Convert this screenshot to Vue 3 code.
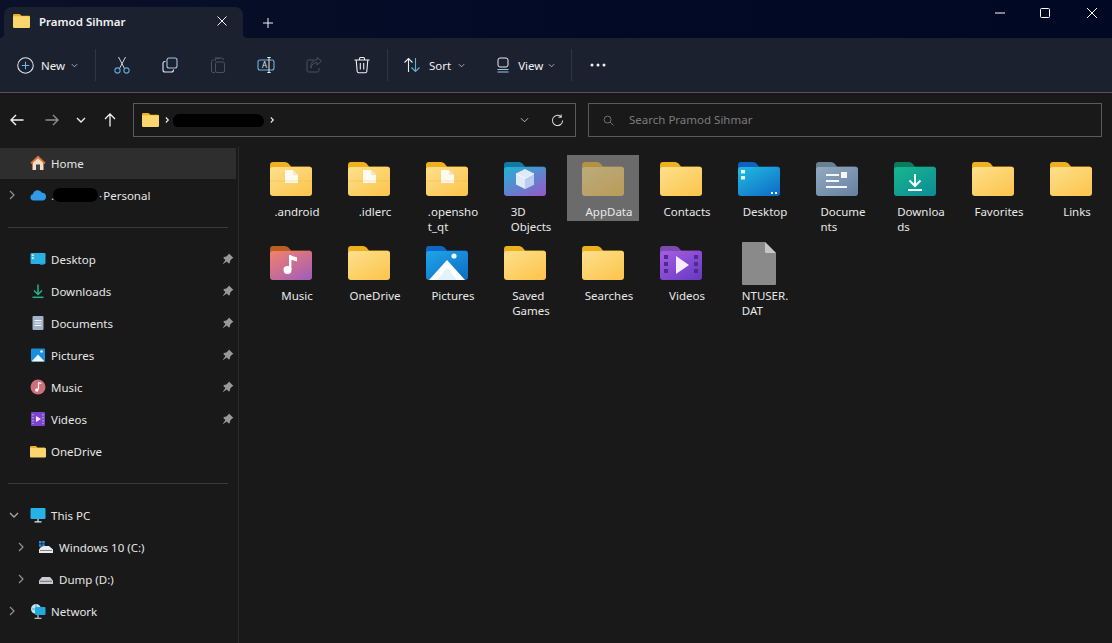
<script setup>
const tools = ['cut', 'copy', 'paste', 'rename', 'share', 'trash']

const navRows = [
  { kind: 'row', icon: 'home', label: 'Home', active: true },
  { kind: 'row', icon: 'cloud', label: 'Personal', chevron: 'right', masked: true },
  { kind: 'sep' },
  { kind: 'row', icon: 'desktop', label: 'Desktop', pin: true },
  { kind: 'row', icon: 'downloads', label: 'Downloads', pin: true },
  { kind: 'row', icon: 'documents', label: 'Documents', pin: true },
  { kind: 'row', icon: 'pictures', label: 'Pictures', pin: true },
  { kind: 'row', icon: 'music', label: 'Music', pin: true },
  { kind: 'row', icon: 'videos', label: 'Videos', pin: true },
  { kind: 'row', icon: 'folder', label: 'OneDrive' },
  { kind: 'sep' },
  { kind: 'row', icon: 'pc', label: 'This PC', chevron: 'down' },
  { kind: 'row', icon: 'cdrive', label: 'Windows 10 (C:)', chevron: 'right', sub: true },
  { kind: 'row', icon: 'ddrive', label: 'Dump (D:)', chevron: 'right', sub: true },
  { kind: 'row', icon: 'network', label: 'Network', chevron: 'right' }
]

const yellow = { tab: '#eeb01f', from: '#fde08c', to: '#fcc650' }
const palette = {
  yellow,
  cube: { tab: '#0f7ba3', from: '#22b4d6', to: '#8e5fc8' },
  desktop: { tab: '#0f62c4', from: '#22bde0', to: '#0f70c8' },
  documents: { tab: '#66818f', from: '#93a9c0', to: '#6a84a4' },
  downloads: { tab: '#0b7a60', from: '#17b78e', to: '#0e8e96' },
  music: { tab: '#b9601e', from: '#f4826a', to: '#a55fb4' },
  pictures: { tab: '#0f66c8', from: '#1fa6ea', to: '#0f70c4' },
  videos: { tab: '#7b4bb2', from: '#a75ee2', to: '#6a3cc4' }
}

const files = [
  { lines: ['.android'], tone: 'yellow', art: 'doc' },
  { lines: ['.idlerc'], tone: 'yellow', art: 'doc' },
  { lines: ['.opensho', 't_qt'], tone: 'yellow', art: 'doc' },
  { lines: ['3D', 'Objects'], tone: 'cube', art: 'cube' },
  { lines: ['AppData'], tone: 'yellow', selected: true },
  { lines: ['Contacts'], tone: 'yellow' },
  { lines: ['Desktop'], tone: 'desktop', art: 'desktop' },
  { lines: ['Docume', 'nts'], tone: 'documents', art: 'documents' },
  { lines: ['Downloa', 'ds'], tone: 'downloads', art: 'downloads' },
  { lines: ['Favorites'], tone: 'yellow' },
  { lines: ['Links'], tone: 'yellow' },
  { lines: ['Music'], tone: 'music', art: 'music' },
  { lines: ['OneDrive'], tone: 'yellow' },
  { lines: ['Pictures'], tone: 'pictures', art: 'pictures' },
  { lines: ['Saved', 'Games'], tone: 'yellow' },
  { lines: ['Searches'], tone: 'yellow' },
  { lines: ['Videos'], tone: 'videos', art: 'videos' },
  { lines: ['NTUSER.', 'DAT'], page: true }
].map((f, i) => ({ ...f, id: 'fg' + i, colors: f.tone ? palette[f.tone] : null }))
</script>

<template>
  <div class="window">
    <header class="titlebar">
      <div class="tab">
        <svg class="tab-folder" viewBox="0 0 42 34" width="17" height="14">
          <path d="M3 0H15q2 0 3.500 1.500L21 4H39a3 3 0 0 1 3 3v10H0V3a3 3 0 0 1 3-3z" fill="#eeb01f" />
          <rect y="5" width="42" height="29" rx="3" fill="#fdd56f" />
        </svg>
        <span class="tab-title">Pramod Sihmar</span>
        <svg class="tab-close" viewBox="0 0 10 10" width="10" height="10"><path d="M.5.5l9 9M9.500.5l-9 9" stroke="#f2f2f2" stroke-width="1" fill="none" /></svg>
      </div>
      <svg class="tab-plus" viewBox="0 0 10 10" width="10" height="10"><path d="M5 0v10M0 5h10" stroke="#f2f2f2" stroke-width="1" fill="none" /></svg>
      <div class="window-controls">
        <svg viewBox="0 0 10 10" width="10" height="10"><path d="M0 5h10" stroke="#fff" stroke-width="1" /></svg>
        <svg viewBox="0 0 10 10" width="10" height="10"><rect x=".5" y=".5" width="9" height="9" rx="1" stroke="#fff" fill="none" /></svg>
        <svg viewBox="0 0 10 10" width="10" height="10"><path d="M0 0l10 10M10 0L0 10" stroke="#fff" stroke-width="1" /></svg>
      </div>
    </header>

    <div class="toolbar">
      <button class="tool new">
        <svg viewBox="0 0 16 16" width="17" height="17">
          <circle cx="8" cy="8" r="7.300" fill="none" stroke="#dfe6ee" stroke-width="1" />
          <path d="M8 4.500v7M4.500 8h7" stroke="#6db8ea" stroke-width="1" />
        </svg>
        <span class="tool-label">New</span>
        <svg class="chev" viewBox="0 0 8 5" width="7" height="5"><path d="M1 1l3 3 3-3" stroke="#b9bec6" fill="none" /></svg>
      </button>
      <span class="divider" />
      <button v-for="t in tools" :key="t" class="tool icon-only">
        <svg viewBox="0 0 18 18" width="18" height="18" fill="none">
          <template v-if="t === 'cut'">
            <path d="M5.500 1l6 11.500M12.500 1l-6 11.500" stroke="#cfd6de" />
            <circle cx="4.500" cy="14.500" r="2.600" stroke="#5fa8d8" stroke-width="1.100" />
            <circle cx="13.500" cy="14.500" r="2.600" stroke="#5fa8d8" stroke-width="1.100" />
          </template>
          <template v-else-if="t === 'copy'">
            <rect x="6" y="2" width="10" height="10" rx="2" stroke="#9fc6e0" stroke-width="1.100" fill="#1c2130" />
            <path d="M4.500 5.500H4a2 2 0 0 0-2 2V14a2 2 0 0 0 2 2h6.500a2 2 0 0 0 2-2v-.5" stroke="#dfe6ee" stroke-width="1.100" />
          </template>
          <template v-else-if="t === 'paste'">
            <path d="M5 4H4a1.500 1.500 0 0 0-1.500 1.500V15A1.500 1.500 0 0 0 4 16.500h2M11 2.500H6.500V5" stroke="#46525f" />
            <rect x="6.500" y="6" width="9" height="10.500" rx="1.500" stroke="#46525f" />
            <path d="M6 2h6.500a2 2 0 0 1 2 2" stroke="#46525f" />
          </template>
          <template v-else-if="t === 'rename'">
            <rect x="1" y="4" width="16" height="10" rx="2" stroke="#6eb4de" stroke-width="1.100" />
            <text x="5" y="12" class="rename-a">A</text>
            <path d="M12 1.500v15M10.300 1.500h3.400M10.300 16.500h3.400" stroke="#e6ebf0" />
          </template>
          <template v-else-if="t === 'share'">
            <path d="M9 4H3.500A1.500 1.500 0 0 0 2 5.500v9A1.500 1.500 0 0 0 3.500 16h9a1.500 1.500 0 0 0 1.500-1.500V12" stroke="#46525f" />
            <path d="M6 12c.5-3.500 3-5.500 6-5.500V9l4.500-4L12 1.500v2.300C8 4 5.500 7.500 6 12z" stroke="#46525f" />
          </template>
          <template v-else>
            <path d="M1.500 4h15M6.500 4V2.500a1 1 0 0 1 1-1h3a1 1 0 0 1 1 1V4" stroke="#eef0f2" stroke-width="1.100" />
            <path d="M3.200 4l1 11.500a1.500 1.500 0 0 0 1.500 1.300h6.600a1.500 1.500 0 0 0 1.500-1.300l1-11.500" stroke="#eef0f2" stroke-width="1.100" />
            <path d="M7.300 7v6.500M10.700 7v6.500" stroke="#eef0f2" stroke-width="1.100" />
          </template>
        </svg>
      </button>
      <span class="divider tight" />
      <button class="tool sort">
        <svg viewBox="0 0 18 16" width="18" height="16" fill="none">
          <path d="M5.500 15V1.500M1.500 5.500l4-4 4 4" stroke="#e8ebef" stroke-width="1.100" />
          <path d="M12.500 1v13.500M8.500 10.500l4 4 4-4" stroke="#5fb3d0" stroke-width="1.100" />
        </svg>
        <span class="tool-label">Sort</span>
        <svg class="chev" viewBox="0 0 8 5" width="7" height="5"><path d="M1 1l3 3 3-3" stroke="#b9bec6" fill="none" /></svg>
      </button>
      <button class="tool view">
        <svg viewBox="0 0 14 16" width="14" height="16" fill="none">
          <rect x="2" y="1" width="10" height="9" rx="2" stroke="#e8ebef" />
          <path d="M1.500 12.500h11M1.500 15h11" stroke="#9fc6e0" />
        </svg>
        <span class="tool-label">View</span>
        <svg class="chev" viewBox="0 0 8 5" width="7" height="5"><path d="M1 1l3 3 3-3" stroke="#b9bec6" fill="none" /></svg>
      </button>
      <span class="divider" />
      <svg class="more" viewBox="0 0 16 4" width="16" height="4"><circle cx="2" cy="2" r="1.500" fill="#eef0f2" /><circle cx="8" cy="2" r="1.500" fill="#eef0f2" /><circle cx="14" cy="2" r="1.500" fill="#eef0f2" /></svg>
    </div>

    <div class="addressbar">
      <div class="nav-buttons">
        <svg viewBox="0 0 14 12" width="14" height="12" fill="none"><path d="M13.500 6H1M6 1L1 6l5 5" stroke="#f2f2f2" stroke-width="1.400" /></svg>
        <svg class="forward" viewBox="0 0 14 12" width="14" height="12" fill="none"><path d="M.5 6H13M8 1l5 5-5 5" stroke="#8e8e8e" stroke-width="1.400" /></svg>
        <svg class="recent" viewBox="0 0 10 7" width="10" height="7" fill="none"><path d="M1 1l4 4 4-4" stroke="#ececec" stroke-width="1.400" /></svg>
        <svg class="up" viewBox="0 0 12 14" width="12" height="14" fill="none"><path d="M6 13.500V1M1 6l5-5 5 5" stroke="#f2f2f2" stroke-width="1.300" /></svg>
      </div>
      <div class="path-box">
        <svg viewBox="0 0 42 34" width="17" height="14">
          <path d="M3 0H15q2 0 3.500 1.500L21 4H39a3 3 0 0 1 3 3v10H0V3a3 3 0 0 1 3-3z" fill="#eeb01f" />
          <rect y="5" width="42" height="29" rx="3" fill="#fdd56f" />
        </svg>
        <svg class="crumb first" viewBox="0 0 6 8" width="5" height="8" fill="none"><path d="M1 1l3 3-3 3" stroke="#f0f0f0" stroke-width="1.300" /></svg>
        <span class="scribble" />
        <svg class="crumb" viewBox="0 0 6 8" width="5" height="8" fill="none"><path d="M1 1l3 3-3 3" stroke="#f0f0f0" stroke-width="1.300" /></svg>
        <span class="grow" />
        <svg class="path-down" viewBox="0 0 10 6" width="9" height="6" fill="none"><path d="M1 1l4 4 4-4" stroke="#c9c9c9" /></svg>
        <svg class="refresh" viewBox="0 0 14 14" width="13" height="13" fill="none"><path d="M12.500 7A5.500 5.500 0 1 1 10.600 2.800M11 .5v3H8" stroke="#dcdcdc" stroke-width="1.100" /></svg>
      </div>
      <div class="search-box">
        <svg viewBox="0 0 12 12" width="11" height="11" fill="none"><circle cx="5" cy="5" r="3.800" stroke="#777" /><path d="M7.800 7.800L11.500 11.500" stroke="#777" /></svg>
        <span>Search Pramod Sihmar</span>
      </div>
    </div>

    <main class="main">
      <nav class="sidebar">
        <template v-for="(r, i) in navRows" :key="i">
          <div v-if="r.kind === 'sep'" class="nav-sep"><span /></div>
          <div v-else class="nav-row" :class="{ active: r.active, sub: r.sub }">
            <span class="nav-chev">
              <svg v-if="r.chevron === 'right'" viewBox="0 0 6 10" width="6" height="10" fill="none"><path d="M1 1l4 4-4 4" stroke="#8d8d8d" stroke-width="1.300" /></svg>
              <svg v-if="r.chevron === 'down'" viewBox="0 0 10 6" width="10" height="6" fill="none"><path d="M1 1l4 4 4-4" stroke="#a8a8a8" stroke-width="1.300" /></svg>
            </span>
            <svg class="nav-icon" viewBox="0 0 16 16" width="16" height="16" fill="none">
              <template v-if="r.icon === 'home'">
                <path d="M2.500 7.500V15h11V7.500L8 2.500z" fill="#f6dcc0" />
                <path d="M8 .5L.3 7.800l1.300 1.200L8 3.300l6.400 5.700 1.300-1.200L8 .5z" fill="#d9723c" />
                <rect x="6" y="9.500" width="4" height="5.500" fill="#3b3f4c" />
              </template>
              <template v-else-if="r.icon === 'cloud'">
                <path d="M3.500 13.500a3.300 3.300 0 0 1-.5-6.500A4.800 4.800 0 0 1 12 5.800a3.800 3.800 0 0 1 .3 7.700z" fill="#2f9be8" />
              </template>
              <template v-else-if="r.icon === 'desktop'">
                <rect x=".5" y="2" width="15" height="11" rx="1" fill="#2bb0e4" />
                <rect x="1.800" y="3.500" width="2" height="1.600" fill="#e8f6fc" />
                <rect x="1.800" y="6.300" width="2" height="1.600" fill="#e8f6fc" />
                <rect x="10" y="12.800" width="4" height="1.200" fill="#1375c8" />
              </template>
              <template v-else-if="r.icon === 'downloads'">
                <path d="M8 1.500v9.500M4 7.500l4 4 4-4" stroke="#20b48e" stroke-width="1.500" />
                <path d="M2.500 14.300h11" stroke="#20b48e" stroke-width="1.500" />
              </template>
              <template v-else-if="r.icon === 'documents'">
                <rect x="2.500" y="1" width="11" height="14" rx="1" fill="#9fb2c6" />
                <path d="M4.500 5.500h7M4.500 8h7M4.500 10.500h7" stroke="#f2f5f8" />
              </template>
              <template v-else-if="r.icon === 'pictures'">
                <rect x="1" y="1.500" width="14" height="13" rx="1" fill="#1a8fe0" />
                <path d="M1.500 14.500L8 7.500l6.500 7z" fill="#eef8fd" />
                <circle cx="11.500" cy="4.500" r="1.200" fill="#f4fbff" />
              </template>
              <template v-else-if="r.icon === 'music'">
                <circle cx="8" cy="8" r="7.500" fill="#cf6f7c" />
                <path d="M8.500 3.500v7M8.500 3.500l3 1" stroke="#fff" stroke-width="1.200" />
                <circle cx="6.800" cy="11" r="1.700" fill="#fff" />
              </template>
              <template v-else-if="r.icon === 'videos'">
                <rect x="1" y="1" width="14" height="14" rx="1" fill="#7a44cc" />
                <path d="M6 5l5 3-5 3z" fill="#f3e8ff" />
                <path d="M3 3v10M13 3v10" stroke="#c49cf0" stroke-width="1.400" stroke-dasharray="1.500 1.500" />
              </template>
              <template v-else-if="r.icon === 'folder'">
                <path d="M1 3h5l1.500 1.500H15V8H0V4a1 1 0 0 1 1-1z" fill="#eeb01f" />
                <rect y="5" width="16" height="9.500" rx="1" fill="#fdd56f" />
              </template>
              <template v-else-if="r.icon === 'pc'">
                <rect x=".5" y="1" width="15" height="11" rx="1" fill="#26b2e6" />
                <path d="M8 12v2.500M4.500 14.800h7" stroke="#e4e8ec" stroke-width="1.200" />
              </template>
              <template v-else-if="r.icon === 'cdrive'">
                <path d="M1 2h2.500v2.500H1zM4.200 2h2.500v2.500H4.200zM1 5.200h2.500v2.500H1zM4.200 5.200h2.500v2.500H4.200z" fill="#2a8fd8" />
                <path d="M3 8l3-1h5l4 3.500V14H1v-3.500z" fill="#e9edf0" />
                <path d="M2 11.500h12" stroke="#7c8186" />
              </template>
              <template v-else-if="r.icon === 'ddrive'">
                <path d="M4 6h8l3 3.500V13H1V9.500z" fill="#c9cdd1" />
                <path d="M2 10.300h12" stroke="#6e7276" />
              </template>
              <template v-else>
                <circle cx="6" cy="6" r="5" fill="#bfe3f0" />
                <path d="M2 6h8M6 1v10" stroke="#3b9fc8" stroke-width=".8" />
                <rect x="5" y="4" width="10.500" height="8" rx="1" fill="#22a9e0" />
                <path d="M8 12v3M4.500 15.300h7" stroke="#e4e8ec" />
              </template>
            </svg>
            <template v-if="r.masked">
              <span class="nav-dot">.</span>
              <span class="nav-mask" />
              <span class="nav-dot after">·</span>
            </template>
            <span class="nav-label">{{ r.label }}</span>
            <svg v-if="r.pin" class="pin" viewBox="0 0 12 12" width="12" height="12">
              <path d="M7 .5l4.500 4.500-1.300.5-2 2-.4 2.500-1 .5-2-2L1 11 .8 10.800l2.600-3.900-2-2 .5-1 2.500-.4 2-2z" fill="#989898" />
            </svg>
          </div>
        </template>
      </nav>

      <section class="files">
        <div v-for="f in files" :key="f.id" class="file" :class="{ selected: f.selected }">
          <svg v-if="f.page" class="page" viewBox="0 0 34 43" width="34" height="43">
            <path d="M0 1a1 1 0 0 1 1-1H23L34 11V42a1 1 0 0 1-1 1H1a1 1 0 0 1-1-1z" fill="#8a8a8a" />
            <path d="M23 0L34 11H24a1 1 0 0 1-1-1z" fill="#c6c6c6" />
          </svg>
          <svg v-else class="folder" viewBox="0 0 42 34" width="42" height="34" :class="{ dim: f.selected }">
            <defs>
              <linearGradient :id="f.id" x1="0" y1="0" x2="0.800" y2="1">
                <stop offset="0" :stop-color="f.colors.from" />
                <stop offset="1" :stop-color="f.colors.to" />
              </linearGradient>
            </defs>
            <path d="M3 0H15q2 0 3.500 1.500L21 4.500H39a3 3 0 0 1 3 3V18H0V3a3 3 0 0 1 3-3z" :fill="f.colors.tab" />
            <path d="M0 8a3 3 0 0 1 3-3H39a3 3 0 0 1 3 3V31a3 3 0 0 1-3 3H3a3 3 0 0 1-3-3z" :fill="`url(#${f.id})`" />
            <g v-if="f.art === 'doc'">
              <path d="M15 8h8l5 5v8H15z" fill="#fff" opacity=".9" />
              <path d="M23 8l5 5h-5z" fill="#f4e6c8" />
              <path d="M0 19H42" stroke="#e9b64a" stroke-width=".6" opacity=".6" />
            </g>
            <g v-else-if="f.art === 'cube'">
              <path d="M21 7l9 4.500v11L21 27l-9-4.500v-11z" fill="#dfeaf8" />
              <path d="M21 16.500V27l9-4.500v-11z" fill="#b8cdf0" />
              <path d="M12 11.500l9 5 9-5" stroke="#fff" fill="none" stroke-width=".7" />
            </g>
            <g v-else-if="f.art === 'desktop'">
              <rect x="3" y="8" width="4" height="3.500" fill="#e4f6fc" />
              <rect x="3" y="14" width="4" height="3.500" fill="#e4f6fc" />
              <rect x="33" y="30" width="2" height="2" fill="#e4f6fc" />
              <rect x="37" y="30" width="2" height="2" fill="#e4f6fc" />
            </g>
            <g v-else-if="f.art === 'documents'" fill="#f4f7fa">
              <rect x="10" y="12" width="13" height="2" />
              <rect x="10" y="18" width="13" height="2" />
              <rect x="10" y="24" width="21" height="2" />
              <rect x="25" y="10" width="6" height="6" />
            </g>
            <g v-else-if="f.art === 'downloads'" stroke="#f4fbfa" fill="none" stroke-width="2">
              <path d="M21 12v12M15.500 18.500L21 24l5.500-5.500" />
              <path d="M14 28h14" />
            </g>
            <g v-else-if="f.art === 'music'" fill="#fff">
              <rect x="19" y="9" width="2.400" height="15" />
              <path d="M19 9l8 2.500v4l-8-2.500z" />
              <circle cx="17.500" cy="24" r="4" />
            </g>
            <g v-else-if="f.art === 'pictures'">
              <path d="M3 34L21 14l18 20z" fill="#fff" />
              <path d="M11 34L21 22l10 12z" fill="#e2f3fc" />
              <circle cx="28" cy="10" r="2.600" fill="#f1faff" />
            </g>
            <g v-else-if="f.art === 'videos'">
              <path d="M16 10l13 9-13 9z" fill="#f6ecff" />
              <g fill="#4f2a92">
                <rect x="4" y="9" width="4" height="4" /><rect x="4" y="16" width="4" height="4" /><rect x="4" y="23" width="4" height="4" />
                <rect x="34" y="9" width="4" height="4" /><rect x="34" y="16" width="4" height="4" /><rect x="34" y="23" width="4" height="4" />
              </g>
            </g>
          </svg>
          <span class="file-name"><span v-for="l in f.lines" :key="l">{{ l }}</span></span>
        </div>
      </section>
    </main>
  </div>
</template>

<style>
html, body { margin: 0; background: #191919; }
</style>

<style scoped>
.window {
  width: 1112px;
  height: 643px;
  display: flex;
  flex-direction: column;
  overflow: hidden;
  background: #191919;
  color: #e8e8e8;
  font-family: "Noto Sans", "Open Sans", sans-serif;
  font-size: 11.5px;
}
svg { display: block; flex: none; }

.titlebar {
  height: 38px;
  flex: none;
  display: flex;
  align-items: center;
  background: linear-gradient(90deg, #0a1128, #020a26 50%, #010823);
}
.tab {
  position: relative;
  width: 239px;
  height: 31px;
  margin: 7px 0 0 4px;
  box-sizing: border-box;
  padding: 0 16px 0 9px;
  display: flex;
  align-items: center;
  background: #1c2130;
  border-radius: 8px 8px 0 0;
}
.tab::before, .tab::after {
  content: "";
  position: absolute;
  bottom: 0;
  width: 4px;
  height: 4px;
}
.tab::before { left: -4px; background: radial-gradient(circle at 0 0, transparent 4px, #1c2130 4px); }
.tab::after { right: -4px; background: radial-gradient(circle at 100% 0, transparent 4px, #1c2130 4px); }
.tab-folder { margin-top: -3px; }
.tab-title { margin-left: 9px; margin-top: -2px; font-weight: 600; color: #f2f2f2; flex: 1; }
.tab-close { margin-top: -3px; }
.tab-plus { margin: 7px 0 0 20px; }
.window-controls {
  margin-left: auto;
  padding: 0 15px 12px 0;
  display: flex;
  gap: 35px;
}
.window-controls svg:last-child { margin-left: 2px; }

.toolbar {
  height: 55px;
  flex: none;
  display: flex;
  align-items: center;
  padding-left: 8px;
  box-sizing: border-box;
  background: #1c2130;
  border-bottom: 1px solid #555;
}
.tool {
  display: flex;
  align-items: center;
  height: 40px;
  padding: 0;
  background: none;
  border: 0;
  color: #f0f0f0;
  font: inherit;
}
.tool-label { display: block; }
.new { width: 83px; padding-left: 9px; box-sizing: border-box; }
.new .tool-label { margin-left: 7px; }
.new .chev { margin-left: 6px; }
.divider { width: 1px; height: 32px; background: #2f3544; margin: 0 2px 0 4px; }
.divider.tight { margin: 0 2px 0 1px; }
.icon-only { width: 48px; justify-content: center; }
.sort { margin-left: 13px; }
.sort .tool-label { margin-left: 8px; }
.sort .chev { margin-left: 7px; }
.view { margin-left: 31px; }
.view .tool-label { margin-left: 8px; }
.view .chev { margin-left: 5px; }
.view + .divider { margin-left: 16px; }
.more { margin-left: 16px; }
.chev { margin-top: 1px; }
.rename-a { font-size: 8px; fill: #dce6ee; font-family: "Noto Sans", sans-serif; }

.addressbar {
  height: 54px;
  flex: none;
  box-sizing: border-box;
  padding: 10px 10px 10px 0;
  display: flex;
  align-items: stretch;
  background: #191919;
}
.nav-buttons {
  width: 133px;
  flex: none;
  display: flex;
  align-items: center;
  padding-left: 10px;
  box-sizing: border-box;
}
.forward { margin-left: 21px; }
.recent { margin-left: 17px; }
.up { margin-left: 18px; }
.path-box, .search-box {
  box-sizing: border-box;
  display: flex;
  align-items: center;
  border: 1px solid #5a5a5a;
  background: #191919;
}
.path-box { width: 443px; padding: 0 11px 0 8px; }
.crumb { margin-left: 6px; }
.crumb.first { margin-left: 6px; }
.scribble {
  width: 91px;
  height: 13px;
  margin-left: 3px;
  background: #000;
  border-radius: 8px 10px 7px 6px;
}
.grow { flex: 1; }
.refresh { margin-left: 22px; }
.search-box {
  margin-left: 12px;
  flex: 1;
  padding-left: 14px;
  color: #7b7b7b;
}
.search-box span { margin: 0 0 2px 15px; }

.main { flex: 1; display: flex; min-height: 0; }
.sidebar {
  width: 239px;
  flex: none;
  box-sizing: border-box;
  border-right: 1px solid #2b2b2b;
  padding-right: 2px;
}
.nav-row {
  height: 32px;
  display: flex;
  align-items: center;
}
.nav-row.active { background: linear-gradient(#191919 1px, #2e2e2e 1px); }
.nav-chev {
  width: 30px;
  height: 32px;
  flex: none;
  box-sizing: border-box;
  padding-left: 8px;
  display: flex;
  align-items: center;
}
.nav-chev svg { margin-left: 1px; }
.nav-row.sub .nav-chev { width: 38px; padding-left: 17px; }
.nav-icon { margin-right: 5px; }
.nav-label { color: #e6e6e6; }
.nav-dot { color: #d8d8d8; }
.nav-dot.after { margin-right: 1px; }
.nav-mask {
  width: 45px;
  height: 14px;
  margin: 0 1px 0 -1px;
  background: #000;
  border-radius: 7px;
}
.pin { margin-left: auto; margin-right: 2px; }
.nav-sep {
  height: 32px;
  display: flex;
  align-items: center;
  padding: 0 8px;
}
.nav-sep span { flex: 1; height: 1px; background: #3a3a3a; }

.files {
  flex: 1;
  display: grid;
  grid-template-columns: repeat(11, 72px);
  grid-auto-rows: 78px;
  column-gap: 6px;
  row-gap: 6px;
  padding: 8px 0 0 16px;
  align-content: start;
}
.file {
  display: flex;
  flex-direction: column;
  align-items: center;
  box-sizing: border-box;
  padding-top: 7px;
  height: 66px;
}
.file.selected { background: #6b6b6b; }
.dim { opacity: .55; }
.page { margin-top: -4px; }
.file-name {
  display: flex;
  flex-direction: column;
  margin: 8px 0 0 12px;
  line-height: 15px;
  white-space: nowrap;
  color: #e8e8e8;
}
.page + .file-name { margin-top: 3px; }
</style>
